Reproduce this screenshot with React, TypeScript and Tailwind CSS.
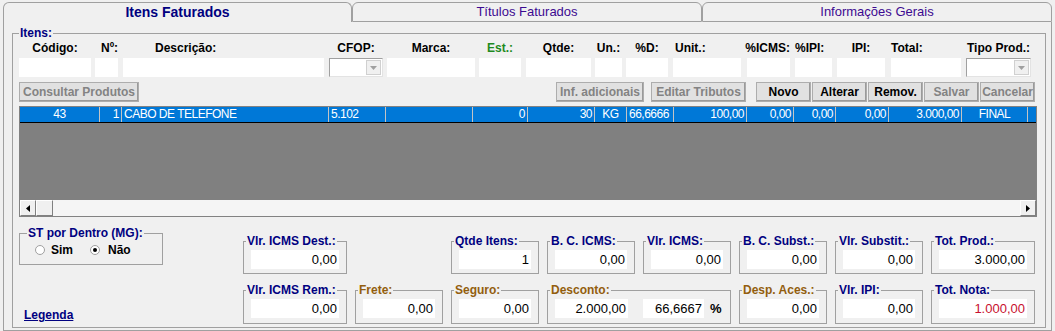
const topCols = [
  { label: "Código:", w: "w-[72px]", ml: "ml-0", lab: "justify-center", color: "text-black" },
  { label: "Nº:", w: "w-[23px]", ml: "ml-[4px]", lab: "justify-start pl-[6px]", color: "text-black" },
  { label: "Descrição:", w: "w-[201px]", ml: "ml-[5px]", lab: "justify-start pl-[32px]", color: "text-black" },
  { label: "CFOP:", w: "w-[54px]", ml: "ml-[5px]", lab: "justify-center", color: "text-black", combo: true },
  { label: "Marca:", w: "w-[88px]", ml: "ml-[4px]", lab: "justify-center", color: "text-black" },
  { label: "Est.:", w: "w-[42px]", ml: "ml-[4px]", lab: "justify-center", color: "text-[#1f8a1f]" },
  { label: "Qtde:", w: "w-[65px]", ml: "ml-[5px]", lab: "justify-center", color: "text-black" },
  { label: "Un.:", w: "w-[27px]", ml: "ml-[4px]", lab: "justify-center", color: "text-black" },
  { label: "%D:", w: "w-[42px]", ml: "ml-[4px]", lab: "justify-center", color: "text-black" },
  { label: "Unit.:", w: "w-[68px]", ml: "ml-[5px]", lab: "justify-start pl-[2px]", color: "text-black" },
  { label: "%ICMS:", w: "w-[43px]", ml: "ml-[6px]", lab: "justify-end", color: "text-black" },
  { label: "%IPI:", w: "w-[37px]", ml: "ml-[5px]", lab: "justify-start", color: "text-black" },
  { label: "IPI:", w: "w-[48px]", ml: "ml-[5px]", lab: "justify-center", color: "text-black" },
  { label: "Total:", w: "w-[70px]", ml: "ml-[6px]", lab: "justify-start", color: "text-black" },
  { label: "Tipo Prod.:", w: "w-[65px]", ml: "ml-[5px]", lab: "justify-center", color: "text-black", combo: true },
];

const rowCells = [
  { w: "w-[80px]", text: "43", align: "justify-center" },
  { w: "w-[22px]", text: "1", align: "justify-end" },
  { w: "w-[207px]", text: "CABO DE TELEFONE", align: "justify-start" },
  { w: "w-[57px]", text: "5.102", align: "justify-start" },
  { w: "w-[87px]", text: "", align: "justify-start" },
  { w: "w-[55px]", text: "0", align: "justify-end" },
  { w: "w-[67px]", text: "30", align: "justify-end" },
  { w: "w-[32px]", text: "KG", align: "justify-center" },
  { w: "w-[47px]", text: "66,6666", align: "justify-start" },
  { w: "w-[73px]", text: "100,00", align: "justify-end" },
  { w: "w-[47px]", text: "0,00", align: "justify-end" },
  { w: "w-[42px]", text: "0,00", align: "justify-end" },
  { w: "w-[53px]", text: "0,00", align: "justify-end" },
  { w: "w-[73px]", text: "3.000,00", align: "justify-end" },
  { w: "w-[66px]", text: "FINAL", align: "justify-center" },
];

function Combo({ w }: { w: string }) {
  return (
    <div
      className={`${w} h-[19px] flex items-center justify-end pr-[1px] bg-white border border-[#a0a0a0] border-r-[#e3e3e3] border-b-[#e3e3e3]`}
    >
      <div className="w-[15px] h-[15px] flex items-center justify-center bg-[#f0f0f0] border border-[#d0d0d0]">
        <svg width="7" height="4" viewBox="0 0 7 4">
          <path d="M0 0h7L3.5 4z" fill="#a0a0a0" />
        </svg>
      </div>
    </div>
  );
}

function Btn({
  label,
  w,
  ml,
  disabled,
}: {
  label: string;
  w: string;
  ml: string;
  disabled?: boolean;
}) {
  return (
    <div
      className={`${w} ${ml} h-[20px] flex items-center justify-center bg-[#e1e1e1] border border-[#adadad] shadow-[inset_-1px_-1px_0_#9a9a9a] text-[12px] font-bold whitespace-nowrap ${
        disabled ? "text-[#838383]" : "text-black"
      }`}
    >
      {label}
    </div>
  );
}

function Box({
  label,
  color,
  w,
  children,
}: {
  label: string;
  color: string;
  w: string;
  children: React.ReactNode;
}) {
  return (
    <fieldset className={`${w} border border-[#a0a0a0]`}>
      <legend className={`ml-[2px] px-[1px] text-[12px] leading-[12px] font-bold whitespace-nowrap ${color}`}>
        {label}
      </legend>
      <div className="flex items-center px-[7px] pt-[3px] pb-[4px]">{children}</div>
    </fieldset>
  );
}

function Val({ v, red, w }: { v: string; red?: boolean; w?: string }) {
  return (
    <div
      className={`${w ?? "flex-1"} h-[19px] bg-white text-right pr-[2px] text-[13px] leading-[19px] ${
        red ? "text-[#c8102e]" : "text-black"
      }`}
    >
      {v}
    </div>
  );
}

function Radio({ checked }: { checked?: boolean }) {
  return (
    <div className="w-[10px] h-[10px] rounded-full border border-[#a0a0a0] bg-white flex items-center justify-center">
      {checked && <div className="w-[4px] h-[4px] rounded-full bg-black" />}
    </div>
  );
}

function ArrowBtn({ dir }: { dir: "left" | "right" }) {
  return (
    <div className="w-[16px] h-[16px] flex items-center justify-center bg-[#f0f0f0] border border-white border-r-[#808080] border-b-[#808080]">
      <svg width="4" height="7" viewBox="0 0 4 7">
        {dir === "left" ? <path d="M4 0v7L0 3.5z" fill="#000" /> : <path d="M0 0v7l4-3.5z" fill="#000" />}
      </svg>
    </div>
  );
}

export default function App() {
  return (
    <div className="w-[1055px] h-[331px] overflow-hidden bg-[#f0f0f0] font-['Liberation_Sans',Arial,sans-serif]">
      {/* Tabs */}
      <div className="flex h-[22px] pl-[3px] pt-[2px]">
        <div className="w-[349px] h-full flex items-center justify-center border border-b-0 border-[#a0a0a0] rounded-t-[6px] text-[14px] font-bold text-[#000080]">
          Itens Faturados
        </div>
        <div className="w-[350px] h-full flex items-center justify-center border border-[#a0a0a0] rounded-t-[6px] text-[13px] text-[#3d0a91]">
          Títulos Faturados
        </div>
        <div className="w-[350px] h-full flex items-center justify-center border border-[#a0a0a0] rounded-t-[6px] text-[13px] text-[#3d0a91]">
          Informações Gerais
        </div>
      </div>

      {/* Panel */}
      <div className="ml-[3px] w-[1049px] h-[309px] border border-t-0 border-[#a0a0a0] pt-[5px] pl-[8px]">
        <fieldset className="w-[1034px] border border-[#a0a0a0]">
          <legend className="ml-[6px] px-[1px] text-[12px] leading-[13px] font-bold text-[#000080]">Itens:</legend>
          <div className="pl-[6px] pb-[3px]">
            {/* Labels + inputs */}
            <div className="flex mt-[1px]">
              {topCols.map((c) => (
                <div key={c.label} className={`${c.w} ${c.ml} flex flex-col`}>
                  <div
                    className={`flex ${c.lab} h-[14px] leading-[14px] whitespace-nowrap text-[12px] font-bold ${c.color}`}
                  >
                    <span>{c.label}</span>
                  </div>
                  <div className="mt-[3px]">
                    {c.combo ? <Combo w={c.w} /> : <div className={`${c.w} h-[19px] bg-white`} />}
                  </div>
                </div>
              ))}
            </div>

            {/* Buttons */}
            <div className="flex mt-[5px]">
              <Btn label="Consultar Produtos" w="w-[120px]" ml="ml-0" disabled />
              <Btn label="Inf. adicionais" w="w-[88px]" ml="ml-[417px]" disabled />
              <Btn label="Editar Tributos" w="w-[95px]" ml="ml-[7px]" disabled />
              <Btn label="Novo" w="w-[55px]" ml="ml-[10px]" />
              <Btn label="Alterar" w="w-[55px]" ml="ml-[1px]" />
              <Btn label="Remov." w="w-[55px]" ml="ml-[1px]" />
              <Btn label="Salvar" w="w-[55px]" ml="ml-[1px]" disabled />
              <Btn label="Cancelar" w="w-[55px]" ml="ml-[1px]" disabled />
            </div>

            {/* Grid */}
            <div className="mt-[4px] w-[1018px] border border-[#828282] bg-[#808080]">
              <div className="flex h-[16px] bg-[#0078d7] border-b border-black text-white text-[12px] tracking-[-0.5px] leading-[15px]">
                {rowCells.map((c, i) => (
                  <div
                    key={i}
                    className={`${c.w} flex ${c.align} px-[2px] overflow-hidden whitespace-nowrap border-r border-[#c4c4c4]`}
                  >
                    {c.text}
                  </div>
                ))}
              </div>
              <div className="h-[77px]" />
              <div className="flex h-[16px] bg-[#f5f5f5]">
                <ArrowBtn dir="left" />
                <div className="w-[17px] h-[16px] bg-[#f0f0f0] border border-white border-r-[#808080] border-b-[#808080]" />
                <div className="flex-1" />
                <ArrowBtn dir="right" />
              </div>
            </div>

            {/* Bottom */}
            <div className="flex">
              <div className="w-[224px] flex flex-col">
                <fieldset className="mt-[10px] w-[144px] border border-[#a0a0a0]">
                  <legend className="ml-[7px] px-[1px] text-[12px] leading-[12px] font-bold text-[#000080] whitespace-nowrap">
                    ST por Dentro (MG):
                  </legend>
                  <div className="flex items-center h-[14px] mt-[4px] mb-[7px] pl-[15px] text-[12px] font-bold text-black">
                    <Radio />
                    <span className="ml-[6px]">Sim</span>
                    <div className="ml-[17px]">
                      <Radio checked />
                    </div>
                    <span className="ml-[8px]">Não</span>
                  </div>
                </fieldset>
                <div className="mt-[43px] ml-[5px] text-[12px] leading-[14px] font-bold text-[#000080] underline">
                  Legenda
                </div>
              </div>

              <div className="flex flex-col mt-[18px] gap-[10px]">
                <div className="flex">
                  <Box label="Vlr. ICMS Dest.:" color="text-[#000080]" w="w-[104px]">
                    <Val v="0,00" />
                  </Box>
                  <div className="flex gap-[8px] ml-[104px]">
                    <Box label="Qtde Itens:" color="text-[#000080]" w="w-[88px]">
                      <Val v="1" />
                    </Box>
                    <Box label="B. C. ICMS:" color="text-[#000080]" w="w-[88px]">
                      <Val v="0,00" />
                    </Box>
                    <Box label="Vlr. ICMS:" color="text-[#000080]" w="w-[88px]">
                      <Val v="0,00" />
                    </Box>
                    <Box label="B. C. Subst.:" color="text-[#000080]" w="w-[88px]">
                      <Val v="0,00" />
                    </Box>
                    <Box label="Vlr. Substit.:" color="text-[#000080]" w="w-[88px]">
                      <Val v="0,00" />
                    </Box>
                    <Box label="Tot. Prod.:" color="text-[#000080]" w="w-[104px]">
                      <Val v="3.000,00" />
                    </Box>
                  </div>
                </div>
                <div className="flex gap-[8px]">
                  <Box label="Vlr. ICMS Rem.:" color="text-[#000080]" w="w-[104px]">
                    <Val v="0,00" />
                  </Box>
                  <Box label="Frete:" color="text-[#935e0e]" w="w-[88px]">
                    <Val v="0,00" />
                  </Box>
                  <Box label="Seguro:" color="text-[#935e0e]" w="w-[88px]">
                    <Val v="0,00" />
                  </Box>
                  <Box label="Desconto:" color="text-[#935e0e]" w="w-[184px]">
                    <Val v="2.000,00" w="w-[73px]" />
                    <div className="ml-[15px]">
                      <Val v="66,6667" w="w-[61px]" />
                    </div>
                    <span className="ml-[6px] text-[13px] font-bold text-black">%</span>
                  </Box>
                  <Box label="Desp. Aces.:" color="text-[#935e0e]" w="w-[88px]">
                    <Val v="0,00" />
                  </Box>
                  <Box label="Vlr. IPI:" color="text-[#000080]" w="w-[88px]">
                    <Val v="0,00" />
                  </Box>
                  <Box label="Tot. Nota:" color="text-[#000080]" w="w-[104px]">
                    <Val v="1.000,00" red />
                  </Box>
                </div>
              </div>
            </div>
          </div>
        </fieldset>
      </div>
    </div>
  );
}
